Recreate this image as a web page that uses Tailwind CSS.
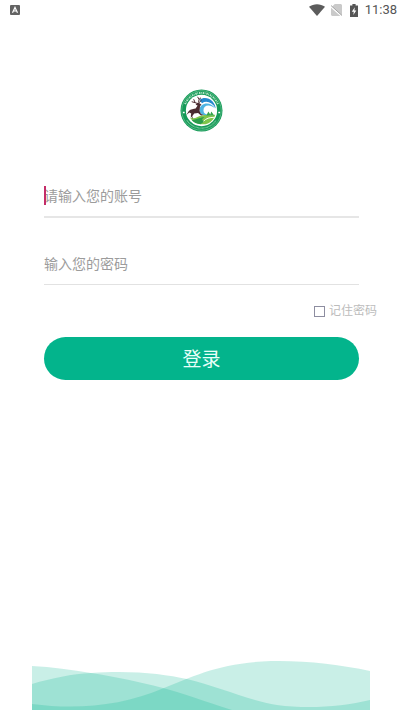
<!DOCTYPE html>
<html lang="zh-CN">
<head>
<meta charset="utf-8">
<meta name="viewport" content="width=device-width, initial-scale=1">
<title>登录</title>
<script src="https://cdn.jsdelivr.net/npm/@tailwindcss/browser@4"></script>
</head>
<body class="flex min-h-screen flex-col bg-white font-['Noto_Sans','Noto_Sans_CJK_SC',sans-serif]">
<header class="flex h-5 items-center justify-between pr-[3px] pl-[10px]">
  <svg class="size-[10px]" viewBox="0 0 10 10" aria-hidden="true"><rect width="10" height="10" rx="1" fill="#636363"/><path d="M2.5 7.7 5 2.4l2.5 5.3M3.5 6h3" fill="none" stroke="#fff" stroke-width="1.2"/></svg>
  <div class="flex items-center">
    <svg class="mr-[6px] h-3 w-4" viewBox="0 0 16 12" aria-hidden="true"><path d="M0 2.7C4.6-.7 11.4-.7 16 2.7L8 12Z" fill="#5c5c5c"/></svg>
    <svg class="mr-2 h-3 w-[11px]" viewBox="0 0 11 12" aria-hidden="true"><path d="M3.8 0H10l1 1v10.5L1 2.8Z M0 3.8 9.4 12H1L0 11Z" fill="#cacaca"/><path d="m0 1.500 11 10" stroke="#a5a5a5"/></svg>
    <svg class="mr-[7px] h-[13px] w-2" viewBox="0 0 8 13" aria-hidden="true"><path d="M0 1.5h2.4V0h3.2v1.5H8V13H0Z" fill="#565656"/><path d="M4.8 3.2 1.8 7.8h2L3.3 11l3-4.6H4.4Z" fill="#fff"/></svg>
    <time class="font-[Roboto,sans-serif] text-[13px] leading-5 text-[#555]">11:38</time>
  </div>
</header>
<main class="flex flex-1 flex-col pr-[41px] pl-11">
  <svg class="mt-[69px] size-[43px] self-center" viewBox="0 0 44 44" role="img" aria-label="徽标">
    <circle cx="22" cy="22" r="21.5" fill="#159a58"/>
    <circle cx="22" cy="22" r="20.2" fill="none" stroke="#7dcca0" stroke-width=".6"/>
    <circle cx="22" cy="22" r="16" fill="#fff"/>
    <path d="M5.2 15.5A18 18 0 0 1 38.8 15.5" fill="none" stroke="#b5e2c6" stroke-width="2" stroke-dasharray="1.5 .6 .8 .9"/>
    <path d="M7 32A18 18 0 0 0 37 32" fill="none" stroke="#8bd0a6" stroke-width="1.3" stroke-dasharray=".8 .5"/>
    <path d="M3 24h1.800M39.200 24H41" stroke="#fff" stroke-width="1.500"/>
    <path d="M20 11C27 6 36 12 36.500 20 33 13.500 27 11.500 22.500 14.500Z" fill="#2588ce"/>
    <path d="M36 20C31 15.500 24 16 24 22c0 2.800 2 4 5 4-5 2-9-.5-9-4.500 0-7 11-10 16-1.500Z" fill="#4fb4e2"/>
    <path d="M10 29c5 3 8-2 13-2 5-1 8 1 13-1-1 5-5 9-10 10-7 1-13-2-16-7Z" fill="#80c54b"/>
    <path d="M12 32c6-1 9-3 13-3-3 2-3 3 0 4l-4 3c-4 0-7-2-9-4Z" fill="#2b9c4b"/>
    <path d="M24 33c3-3 6-4 11-4" fill="none" stroke="#fff" stroke-width="1"/>
    <path d="m27 27 2-4 2 3 1-3 3 4Z" fill="#36a44c"/>
    <path d="M9 22.500c2-2 5-2 7-2.500l2-3-2-1 2-2 2 .5 2 1.700-1.500 1.300-.5 5 1.500 3 3 1-3 .5-3-2.500-4 .5-2 3 1 3-2.500-3 .5-3-2-1-3 2.500Z" fill="#4b2a30"/>
    <path d="m18.500 15-3-1-1.500-3.500m1.500 3.500L12 13m7 1 .5-3.500L18 8m1.500 2.500 2-1.500m-2 5 2.500-2.500" fill="none" stroke="#4b2a30" stroke-width="1"/>
  </svg>
  <form class="mt-[42px]">
    <div class="relative border-b-2 border-[#e6e6e6]">
      <input id="account" type="text" aria-label="账号" placeholder="请输入您的账号" class="block h-[42px] w-full bg-transparent text-[14px] leading-5 text-[#333] outline-none placeholder:text-[#9c9c9c]">
      <span class="absolute top-[12px] left-0 h-[19px] w-[2px] bg-[#c42d68]" aria-hidden="true"></span>
    </div>
    <div class="mt-6 border-b border-[#e2e2e2]">
      <input id="password" type="password" aria-label="密码" placeholder="输入您的密码" class="block h-[42px] w-full bg-transparent text-[14px] leading-5 text-[#333] outline-none placeholder:text-[#9c9c9c]">
    </div>
    <label class="-mr-[18px] mt-4 flex h-5 items-center justify-end gap-1 text-[12px] leading-5 text-[#bcbcbc]">
      <input type="checkbox" class="size-[11px] appearance-none border border-[#8d8da0] bg-white checked:bg-[#03b48c]">记住密码
    </label>
    <button type="submit" class="mt-4 h-[43px] w-full rounded-full bg-[#03b48c] text-[19px] leading-7 text-[#e9fff9]">登录</button>
  </form>
</main>
<svg class="mr-[30px] ml-8 h-[50px] self-stretch" viewBox="0 0 338 50" preserveAspectRatio="none" fill="#00b48c" fill-opacity=".21" aria-hidden="true">
  <path d="M0 6C20 7 40 10 59 13C85 17 108 22 131 28C150 33 172 41 200 50H0Z"/>
  <path d="M0 24C20 18 40 14 59 13C100 10 132 14 155 19C185 26 215 40 245 45C275 49 310 47 338 40V50H0Z"/>
  <path d="M0 44C45 50 90 46 132 28C160 17 185 4 230 1.500C265-.5 305 4 338 11V50H0Z"/>
</svg>
</body>
</html>
